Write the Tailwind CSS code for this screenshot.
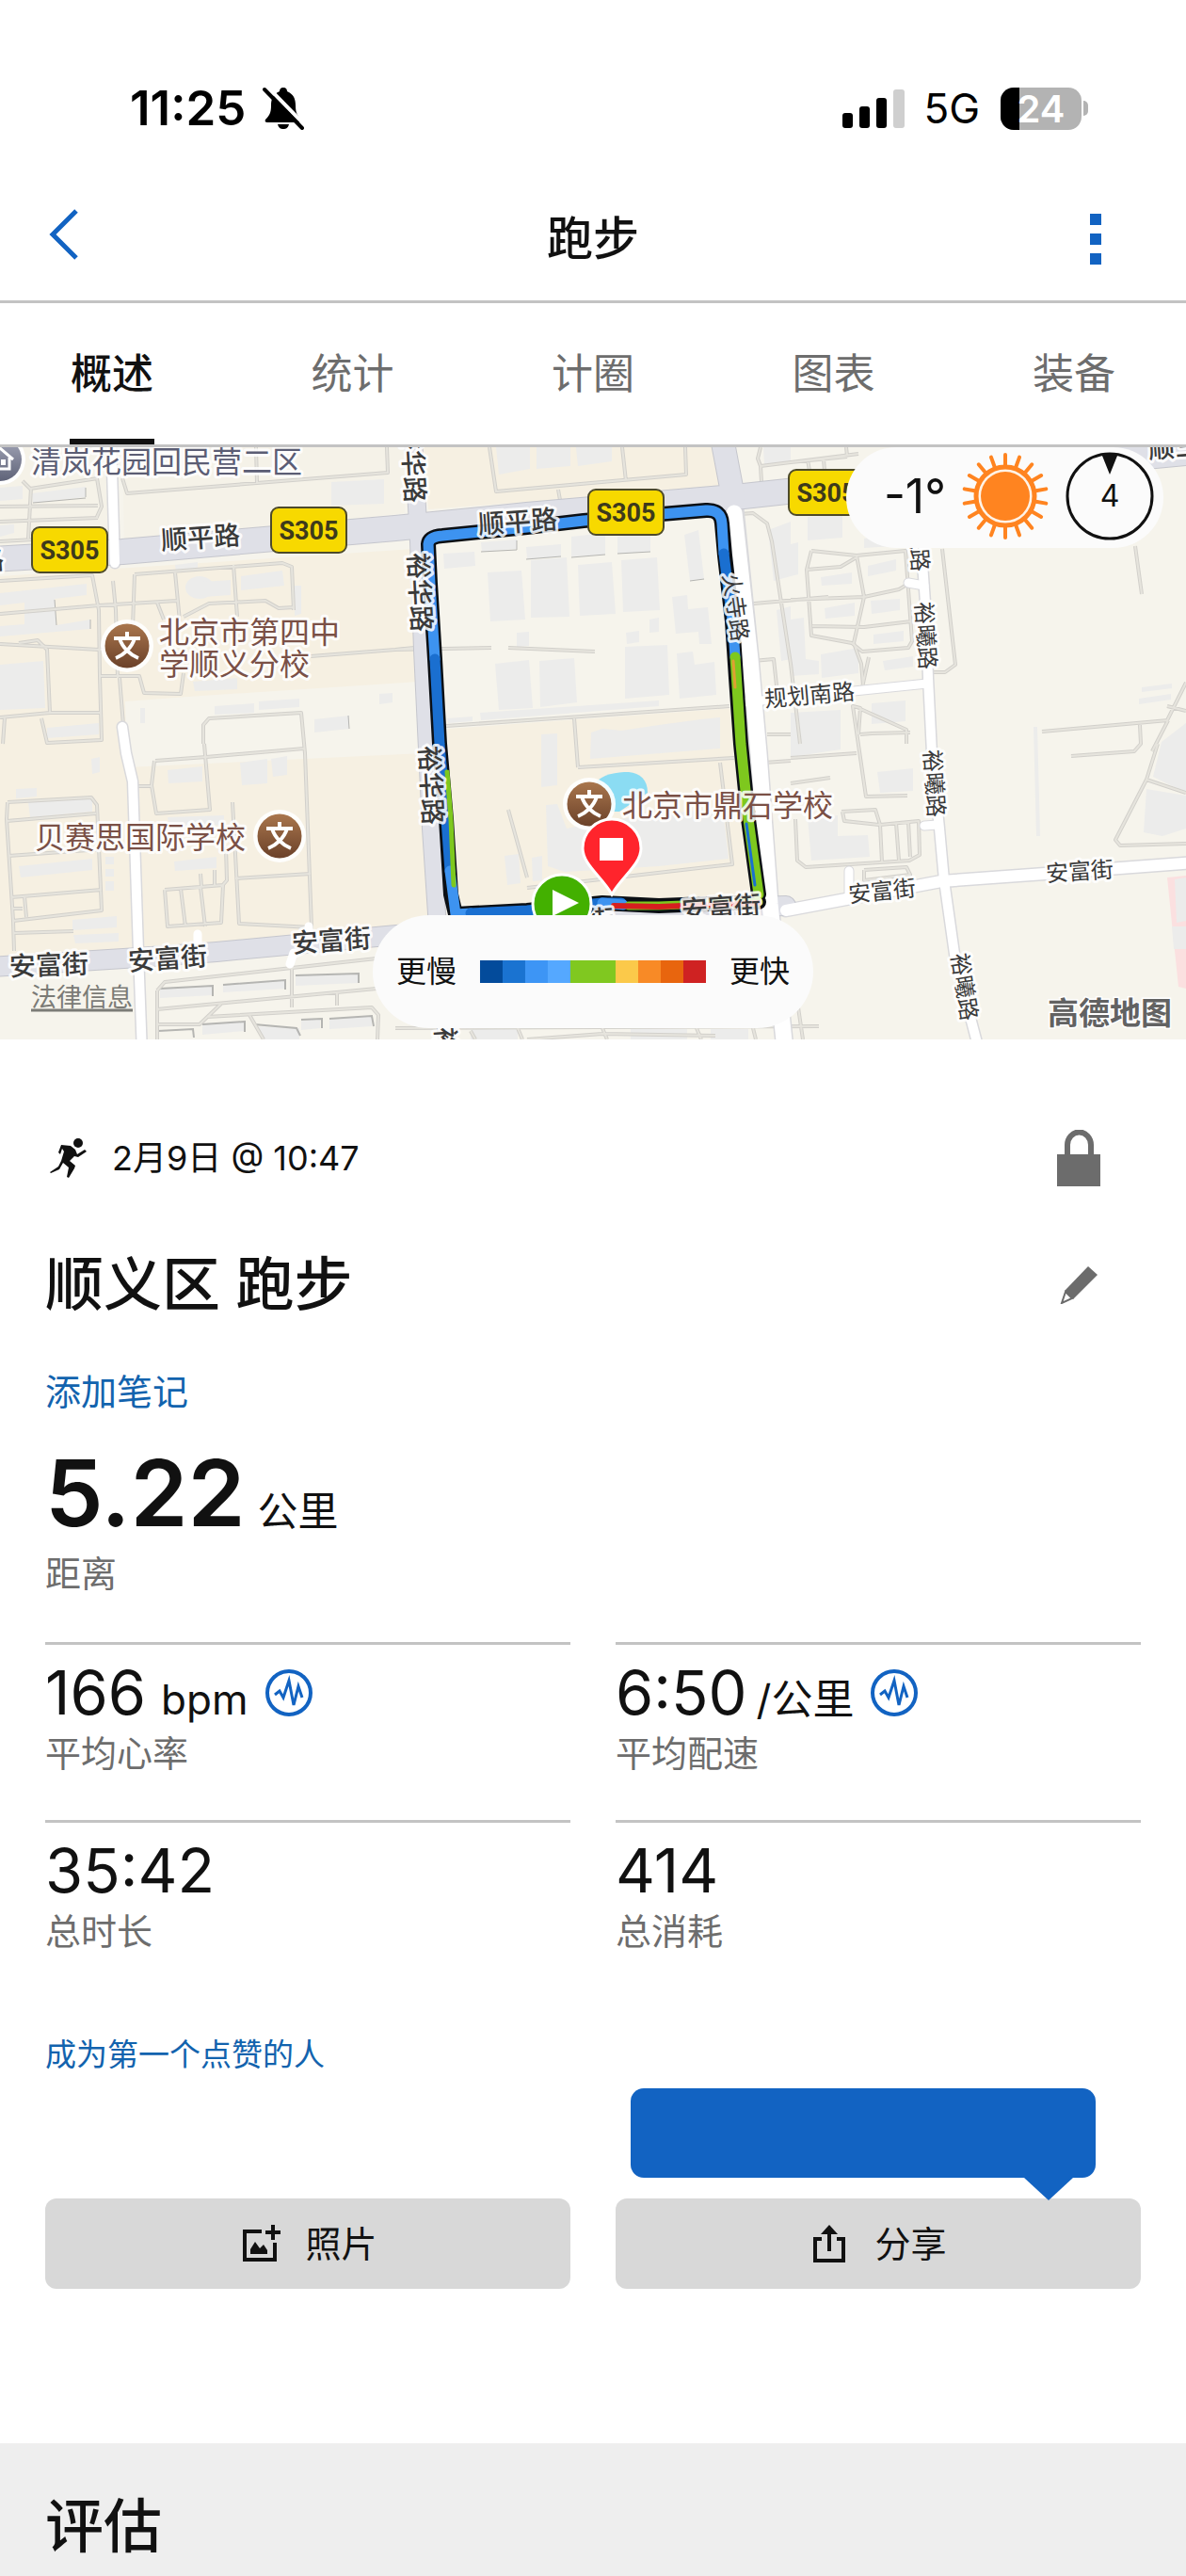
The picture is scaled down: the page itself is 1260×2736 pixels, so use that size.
<!DOCTYPE html>
<html lang="zh-CN">
<head>
  <meta charset="UTF-8" />
  <meta name="viewport" content="width=device-width, initial-scale=1.0" />
  <title>跑步</title>
  <script src="https://cdn.jsdelivr.net/npm/@tailwindcss/browser@4"></script>
</head>
<body class="flex min-h-screen flex-col bg-white font-['Inter','Noto_Sans_CJK_SC',sans-serif] text-[#111]">

  <!-- Status bar -->
  <div class="flex items-center justify-between pt-20 pr-[104px] pl-[138px] text-black">
    <div class="flex h-[70px] items-center gap-[18px]">
      <span class="text-[51px] leading-[70px] font-semibold">11:25</span>
      <svg class="h-[46px] w-[44px]" viewBox="0 0 44 46" aria-label="静音">
        <path d="M22 1c-3 0-4 2-4 4C11 8 9 13 9 20c0 8-2 11-6 15-1 2 0 3 2 3h34c2 0 3-1 2-3-4-4-6-7-6-15 0-7-2-12-9-15 0-2-1-4-4-4z" fill="#000" />
        <path d="M16 40h12c-1 4-3 5-6 5s-5-1-6-5z" fill="#000" />
        <path d="M5 0 46 42" stroke="#fff" stroke-width="4" />
        <path d="M2 3 42 44" stroke="#000" stroke-width="4" stroke-linecap="round" />
      </svg>
    </div>
    <div class="flex h-[70px] items-center">
      <svg class="h-[42px] w-[66px]" viewBox="0 0 66 42" aria-label="信号">
        <rect x="0" y="26" width="11" height="16" rx="3" />
        <rect x="18" y="19" width="11" height="23" rx="3" />
        <rect x="36" y="10" width="11" height="32" rx="3" />
        <rect x="54" y="1" width="12" height="41" rx="3" fill="#cfcfcf" />
      </svg>
      <span class="ml-5 text-[44px] leading-[70px]">5G</span>
      <div class="relative ml-[22px] h-[45px] w-[86px] overflow-hidden rounded-[14px] bg-[#b3b3b3] text-center text-[40px] leading-[46px] font-semibold text-white">
        <div class="absolute inset-y-0 left-0 w-5 bg-black"></div>
        <span class="relative">24</span>
      </div>
      <div class="ml-[2px] h-4 w-[5px] rounded-r-full bg-[#b3b3b3]"></div>
    </div>
  </div>

  <!-- Title bar -->
  <header class="mt-[54px] mb-[15px] flex h-[100px] items-center justify-between px-[50px]">
    <button class="w-14 pb-[10px]" aria-label="返回">
      <svg class="h-[56px] w-[36px]" viewBox="0 0 36 56" fill="none" stroke="#1263c2" stroke-width="5"><path d="M31 3 6 28l25 25" /></svg>
    </button>
    <h1 class="text-[49px] leading-[60px] font-medium">跑步</h1>
    <button class="flex w-14 flex-col items-end gap-[9px] pr-10" aria-label="更多">
      <span class="size-3 bg-[#1263c2]"></span>
      <span class="size-3 bg-[#1263c2]"></span>
      <span class="size-3 bg-[#1263c2]"></span>
    </button>
  </header>

  <!-- Tabs -->
  <nav class="flex h-[156px] justify-between border-y-[3px] border-[#c3c3c3] px-[74px] text-[44px] text-[#6d6d6d]">
    <a href="#overview" class="flex w-[90px] items-center justify-center border-b-[6px] border-[#111] pt-[6px] font-medium whitespace-nowrap text-[#111]">概述</a>
    <a href="#stats" class="flex w-[90px] items-center justify-center whitespace-nowrap">统计</a>
    <a href="#laps" class="flex w-[90px] items-center justify-center whitespace-nowrap">计圈</a>
    <a href="#charts" class="flex w-[90px] items-center justify-center whitespace-nowrap">图表</a>
    <a href="#gear" class="flex w-[90px] items-center justify-center whitespace-nowrap">装备</a>
  </nav>

  <!-- Map -->
  <section class="relative overflow-hidden">
    <svg class="block w-full" viewBox="0 475 1260 629" role="img" aria-label="路线地图">
      <defs>
        <linearGradient id="school" x1="0" y1="0" x2="0" y2="1">
          <stop offset="0" stop-color="#a9764d" />
          <stop offset="1" stop-color="#6b4129" />
        </linearGradient>
        <linearGradient id="home" x1="0" y1="0" x2="0" y2="1">
          <stop offset="0" stop-color="#a3a6b8" />
          <stop offset="1" stop-color="#5f6378" />
        </linearGradient>
        <g id="schoolPin">
          <circle r="28" fill="#fff" fill-opacity=".9" />
          <circle r="23.500" fill="url(#school)" />
          <path d="M0-15v6M-14-8h28M-8-8C-5 2 4 10 12 13M8-8C5 2-4 10-12 13" fill="none" stroke="#fff" stroke-width="4" />
        </g>
        <g id="badge">
          <rect x="-40" y="-24" width="80" height="48" rx="8" fill="#f7d900" stroke="#4d4a2a" stroke-width="2" />
          <text y="10" text-anchor="middle" font-family="Liberation Sans Narrow, Roboto, sans-serif" font-size="27" font-weight="700" fill="#3d3a1c">S305</text>
        </g>
        <!-- footpaths and lanes -->
        <path id="lanes" fill="none" stroke-linejoin="round" d="
          M24 511 32 519 104 508M33 518 30 572M0 538 104 537M0 554 104 550M103 508 108 538 102 551M0 575 90 570
          M130 508 135 524 412 502 411 475M272 475 273 513
          M0 617 98 611 105 648 106 718M0 652 105 643 188 638M120 617 123 648 125 720M143 610 300 598 310 602 312 648
          M143 610 141 665M186 608 191 660M248 600 252 655M167 640 174 658M195 655 222 641 282 638 296 646 312 645
          M0 684 105 690 142 688M20 683 40 680 50 690 53 757 0 762M105 718 148 718 153 736 192 737 195 715
          M106 718 108 786 50 789 44 763M53 757 106 757M127 720 131 770M5 762 3 790
          M216 790 216 770 222 763 320 757 324 800 331 985 254 981 247 852M330 697 420 690M250 933 330 928
          M165 808 219 804 323 795M217 790 223 860 166 864 161 834 164 808M144 835 162 835
          M8 852 97 847 103 855 108 967 14 978 7 870 8 852M7 872 102 864M9 909 108 902M12 953 108 945M14 965 24 965M26 952 28 974
          M14 978 15 1010M15 991 78 989M175 945 237 940 235 980 178 984 175 945M192 944 197 984M213 942 218 984
          M213 928 214 942M228 924 228 940M240 900 241 935 235 942
          M167 1052 175 1043 310 1028 400 1018M167 1052 167 1104M167 1072 400 1050M167 1088 212 1088 235 1066M220 1080 395 1070 402 1078 401 1104
          M310 1028 310 1070M358 1055 358 1068M265 1078 280 1104
          M520 475 527 522 729 504 728 475M661 475 665 511M593 520 595 531
          M420 690 522 688M540 688 632 692M474 771 775 750M610 763 614 815M540 860 560 932M420 690 440 688M614 815 780 805M765 810 778 918 560 943
          M786 546 800 545 815 556 820 575 840 705 850 790M808 475 805 487 808 495 840 491 912 482M808 495 809 512M790 642 880 634
          M800 702 822 700 825 728M815 780 840 780M812 810 840 808M840 491 900 485M899 475 900 484M858 488 860 500M875 488 876 500
          M862 585 857 605 862 675 905 683 916 692 965 688 969 681 962 585 910 590 862 585M910 590 918 634 907 683M857 605 893 602 910 592
          M840 637 918 634 955 626 965 620M863 665 918 666 968 660M907 683 915 705 917 728M923 698 916 730
          M1001 583 1015 706 1004 714 990 714M1206 580 1213 631M1107 777 1241 765M1240 765 1260 725M1241 765 1224 798M1211 770 1212 790 1205 798 1138 803
          M912 752 963 775 963 790M912 780 914 752 906 750 920 846 964 845M840 805 910 800M914 780 926 779 967 778
          M840 832 882 826M894 862 930 860 935 876 976 872 977 908 966 914 856 921 847 914 845 870M935 876 937 916M952 874 955 914M965 873 967 910M895 862 897 872 934 876
          M918 924 963 921 967 929 918 935 918 924
          M1230 790 1218 828 1185 892 1190 898 1260 896M1218 828 1260 842M1240 750 1260 755
          M420 1092 870 1090M500 1095 505 1104M550 1092 555 1104M640 1092 645 1104M740 1092 745 1104M800 1092 803 1104M848 1070 853 1104M560 1104 640 1098 760 1100" />
      </defs>

      <rect y="475" width="1260" height="629" fill="#f6f4ec" />
      <g fill="#f6f0e2">
        <path d="M0 612 440 583 455 985 155 1012 0 1020z" />
        <path d="M450 475h312l5 42-312 24z" />
        <path d="M476 774 780 752 802 950 500 966 484 950z" />
      </g>
      <path d="M200 740 445 724 450 800 135 815 133 745z" fill="#f6f4ec" />
      <path d="M0 475H120L122 585 0 590zM130 475H430V545L132 580z" fill="#f5f2e8" />

      <!-- buildings -->
      <g fill="#ececeb">
        <path d="M0 518 24 516V530L0 532zM34 524 91 517V528L35 534zM0 558 15 557V566L0 570zM352 512 408 509V535L352 537z" />
        <path d="M0 630 92 620V632L58 636 60 664 96 658V668L0 676V665L26 663V640L0 643zM0 706 46 702 48 752 0 754z" />
        <ellipse cx="212" cy="624" rx="15" ry="12" />
        <path d="M215 618 245 616V632L216 634zM256 612 300 606 302 622 256 627zM186 600 210 597V604L187 606zM313 622 320 622V652L313 654zM205 724 252 720V732L207 734z" />
        <path d="M228 750 270 747V757L228 759zM275 745 318 742V751L275 754zM334 764 371 760V774L334 778zM403 737 417 736V746L403 748zM149 752 154 752V768L149 768zM50 773 105 768V780L50 784z" />
        <path d="M97 806 106 804V820L98 822zM178 818 215 814V830L179 832zM255 810 284 806V832L257 834zM288 806 305 803V823L290 825z" />
        <path d="M17 838 39 837V846L17 848zM30 852 98 847V862L32 868zM20 920 98 912V924L22 932zM185 915 230 910V922L186 925zM178 868 238 866V876L180 880zM77 977 124 973V985L77 988zM78 993 126 991V1000L80 1002z" />
        <path d="M112 910h9v8h-9zM112 923h9v8h-9zM112 936h9v10h-9z" />
        <path d="M527 475H563V498L530 504zM570 475H606V495L570 498zM612 475H650V490L614 495z" />
        <path d="M511 576 549 573V583L512 586zM471 588 504 586 505 601 472 604zM559 581 596 578V591L560 594zM607 570 643 566V589L607 591zM656 570 691 566V586L656 588z" />
        <path d="M518 608 554 606 558 658 521 660zM564 595 602 592 605 655 564 656zM614 600 650 597 654 652 616 654zM660 595 698 592 701 648 662 650z" />
        <path d="M727 568 742 563 748 615 733 617zM714 634 730 632 731 647 752 645 756 684 743 684 742 671 718 673zM549 672 562 671V686L549 687zM665 672 679 670V682L666 684zM690 658 700 656V671L690 672z" />
        <path d="M526 705 562 701 566 752 530 754zM573 702 610 699 613 746 574 751zM664 687 709 685 711 738 664 742zM719 694 736 692 738 706 759 703 761 738 722 742z" />
        <path d="M510 757 700 744V750L511 765zM475 763 502 761V766L476 768z" />
        <path d="M575 780 592 779V834L575 836zM628 778 640 774 660 776 700 770 745 764 765 762V795L627 806z" />
        <path d="M580 855 592 854 602 880 640 872 700 865 768 858 774 912 700 920 600 926 582 920zM536 909 551 907 553 938 539 940zM565 911 576 909V935L566 936z" />
        <path d="M811 475H840V490L812 494zM816 563 840 554V612L822 617zM825 648 840 644V700L830 702z" />
        <path d="M858 549 895 547V571L858 574zM918 572 950 568V580L918 582zM840 578 848 576V610L840 612zM922 601 952 594V606L922 612zM872 613 905 608V620L873 622zM876 646 908 640V654L877 657zM925 638 956 636V648L926 652zM928 674 960 670V681L928 684zM938 702 970 697V708L940 712zM872 695 912 688V715L873 720z" />
        <path d="M840 658 854 656 856 700 870 702V716L840 718zM926 747 962 744V766L926 769zM840 757 893 754V796L840 804zM932 820 970 816V840L935 842zM858 868 890 866V888L922 887 924 910 862 914z" />
        <path d="M1213 730 1245 726V731L1213 735zM1210 742 1244 737V743L1210 748zM1234 788 1260 768V842L1225 825zM1218 838 1260 845V880L1235 888 1215 884zM1098 772 1102 772 1105 888 1101 888z" />
        <path d="M170 1050 226 1047V1057L170 1060zM237 1046 303 1041V1050L237 1054zM314 1036 380 1034V1044L314 1047zM215 1088 260 1085V1095L215 1099zM320 1084 340 1082V1092L320 1094zM350 1082 395 1079V1090L350 1093zM270 1090 318 1092V1104H280z" />
        <path d="M500 1093h50v11h-50zM670 1093h60v11h-60zM755 1093h40v11h-40z" />
      </g>
      <g fill="none" stroke="#b5b5b2" stroke-width="2">
        <path d="M170 1050 226 1047V1058M237 1046 303 1041V1051M314 1036 381 1034V1044M215 1088 260 1085V1096M320 1083 342 1082V1092M350 1082 395 1079 397 1090M168 1095 205 1093 206 1102M270 1088 315 1092 319 1100" />
        <path d="M511 586 549 584V574M559 594 596 591M607 592 643 589M656 588 691 586M733 617 748 615M91 518V528M35 534 91 529M96 658V668M60 664 58 637M370 760 371 774" stroke-width="1" />
      </g>
      <path d="M1240 932 1260 930V1050L1252 1048z" fill="#fbe0e0" />
      <path d="M1248 934 1260 932V978L1250 980zM1245 984H1260V1008H1247z" fill="#ececeb" />

      <use href="#lanes" stroke="#d2d0cb" stroke-width="4" />
      <use href="#lanes" stroke="#e6e4dd" stroke-width="2" />

      <!-- streets -->
      <g fill="none" stroke-linecap="round" stroke-linejoin="round">
        <g stroke="#d9d9dc" stroke-width="15">
          <path d="M118 465 122 598M130 772 134 800 141 830 147 1010 151 1120" stroke-width="13" />
          <path d="M835 967 1000 936 1110 928 1270 916" />
          <path d="M978 570 983 640 986 720 990 800 998 880 1003 935 1015 1020 1040 1115" stroke-width="13" />
          <path d="M790 746 985 726M965 619 982 622M982 877 996 876M902 925V955" stroke-width="11" />
          <path d="M780 535 797 700 806 800 818 960 834 1115" stroke-width="20" />
        </g>
        <g stroke="#dcdde4" stroke-width="26">
          <path d="M-10 594 130 586 420 561 560 547 790 527 900 515 1270 480" stroke="#c5c6cd" stroke-width="28" />
          <path d="M-10 1027 147 1017 230 1011 400 995 560 980 700 966 835 962" stroke="#c5c6cd" stroke-width="22" />
          <path d="M439 465 445 575 449 690 458 880 466 1000 476 1115" stroke="#c5c6cd" stroke-width="20" />
          <path d="M767 465 779 528" stroke="#c5c6cd" />
          <path d="M-10 594 130 586 420 561 560 547 790 527 900 515 1270 480" stroke="#dfe0e7" />
          <path d="M-10 1027 147 1017 230 1011 400 995 560 980 700 966 835 962" stroke="#dfe0e7" stroke-width="20" />
          <path d="M439 465 445 575 449 690 458 880 466 1000 476 1115" stroke="#dfe0e7" stroke-width="18" />
          <path d="M767 465 779 528" stroke="#dfe0e7" stroke-width="24" />
        </g>
        <g stroke="#fff" stroke-width="12">
          <path d="M118 465 122 598M130 772 134 800 141 830 147 1010 151 1120" stroke-width="10" />
          <path d="M835 967 1000 936 1110 928 1270 916" />
          <path d="M978 570 983 640 986 720 990 800 998 880 1003 935 1015 1020 1040 1115" stroke-width="10" />
          <path d="M790 746 985 726M965 619 982 622M982 877 996 876M902 925V955M210 992V1004M328 984V990M312 1012 308 1024" stroke-width="9" />
          <path d="M780 545 797 700 806 800 818 960 834 1115" stroke-width="17" />
        </g>
      </g>

      <path d="M632 832C640 822 655 820 668 820c12 1 20 8 20 22l-30 20h-20z" fill="#8bdcf3" />

      <!-- route -->
      <g fill="none" stroke-linejoin="round" stroke-linecap="round">
        <path d="M484 971 479 950 474 870 467 790 462 700 457 620 455 578Q456 570 470 569L560 560 620 553 750 542Q766 541 767 556L770 590 778 660 782 720 787 790 795 870 806 950M484 971 560 967 640 959 700 962 806 958" stroke="#0b0f14" stroke-width="16" />
        <g stroke-width="11">
          <path d="M462 700 457 620 455 578Q456 570 470 569L560 560 620 553 750 542Q766 541 767 556L769 588" stroke="#3d93f0" />
          <path d="M769 588 778 660" stroke="#1a6fd0" />
          <path d="M777 640 781 698" stroke="#3d93f0" />
          <path d="M781 698 787 790 795 870 806 950" stroke="#7ec81e" />
          <path d="M462 700 467 790 474 870 478 925" stroke="#1a6fd0" />
          <path d="M478 925 484 971 500 970" stroke="#3d93f0" />
          <path d="M500 970 560 967 640 959 660 959" stroke="#1a6fd0" />
          <path d="M640 959 662 961" stroke="#3d93f0" />
          <path d="M668 962 700 962 806 958" stroke="#7ec81e" stroke-width="9" />
          <path d="M652 962 700 963 806 959" stroke="#d61f1f" stroke-width="6" />
        </g>
        <path d="M475 820 479 870 482 940" stroke="#7ec81e" stroke-width="5" />
        <path d="M779 702 781 730" stroke="#e0a032" stroke-width="3" />
        <path d="M793 875 802 940" stroke="#1a6fd0" stroke-width="3" />
      </g>

      <!-- street names -->
      <g font-family="Noto Sans CJK SC, sans-serif" text-anchor="middle" fill="#3a3a3a" stroke="#fff" stroke-opacity=".85" stroke-width="6" stroke-linejoin="round" paint-order="stroke" font-size="28" font-weight="500">
        <text transform="translate(213 571) rotate(-4)" dy="10">顺平路</text>
        <text transform="translate(550 554) rotate(-4)" dy="10">顺平路</text>
        <text transform="translate(439 492) rotate(87)" dy="10">裕华路</text>
        <text transform="translate(446 629) rotate(87)" dy="10">裕华路</text>
        <text transform="translate(458 834) rotate(87)" dy="10">裕华路</text>
        <text transform="translate(475 1133) rotate(87)" dy="10">裕华路</text>
        <text transform="translate(52 1025) rotate(-2)" dy="10">安富街</text>
        <text transform="translate(178 1018) rotate(-4)" dy="10">安富街</text>
        <text transform="translate(352 999) rotate(-4)" dy="10">安富街</text>
        <text transform="translate(766 964) rotate(-4)" dy="10">安富街</text>
        <text transform="translate(610 979) rotate(-4)" dy="10">安富街</text>
        <text transform="translate(-38 597) rotate(-4)" dy="10">顺平路</text>
        <text transform="translate(1262 474) rotate(-4)" dy="10">顺三路</text>
        <g font-size="24" font-weight="400">
          <text transform="translate(782 645) rotate(82)" dy="9">火寺路</text>
          <text transform="translate(860 738) rotate(-5)" dy="9">规划南路</text>
          <text transform="translate(976 571) rotate(86)" dy="9">裕曦路</text>
          <text transform="translate(984 675) rotate(86)" dy="9">裕曦路</text>
          <text transform="translate(993 832) rotate(86)" dy="9">裕曦路</text>
          <text transform="translate(1025 1048) rotate(81)" dy="9">裕曦路</text>
          <text transform="translate(937 946) rotate(-6)" dy="9">安富街</text>
          <text transform="translate(1147 925) rotate(-4)" dy="9">安富街</text>
        </g>
      </g>

      <use href="#badge" x="74" y="584" />
      <use href="#badge" x="328" y="563" />
      <use href="#badge" x="665" y="544" />
      <use href="#badge" x="878" y="523" />

      <!-- places -->
      <g font-family="Noto Sans CJK SC, sans-serif" font-size="32" fill="#7a5046" stroke="#fff" stroke-opacity=".85" stroke-width="6" stroke-linejoin="round" paint-order="stroke">
        <text x="33" y="502" fill="#5b5d74">清岚花园回民营二区</text>
        <text x="169" y="683">北京市第四中</text>
        <text x="169" y="717">学顺义分校</text>
        <text x="37" y="901">贝赛思国际学校</text>
        <text x="661" y="867">北京市鼎石学校</text>
      </g>
      <circle cx="0" cy="488" r="27" fill="#fff" />
      <circle cx="0" cy="488" r="23" fill="url(#home)" />
      <path d="M-14 488 0 476 14 488M-9 486V498H10V486" fill="none" stroke="#fff" stroke-width="3" />
      <path d="M1 488h5v6h-5z" fill="#fff" />
      <use href="#schoolPin" x="135" y="686" />
      <use href="#schoolPin" x="297" y="888" />
      <use href="#schoolPin" x="626" y="854" />

      <!-- start and finish -->
      <circle cx="597" cy="960" r="31" fill="#43b000" stroke="#fff" stroke-width="3" />
      <path d="M587 945v28l28-14z" fill="#fff" />
      <path d="M650 950C640 932 619 918 619 901a31 31 0 0 1 62 0c0 17-21 31-31 49z" fill="#ff242c" stroke="#fff" stroke-width="3" />
      <rect x="637" y="890" width="25" height="24" fill="#fff" />

      <a href="#legal">
        <text x="33" y="1069" font-family="Noto Sans CJK SC, sans-serif" font-size="27" fill="#7b7b76">法律信息</text>
        <path d="M33 1073H141" stroke="#7b7b76" stroke-width="3" />
      </a>
      <text x="1113" y="1088" font-family="Noto Sans CJK SC, sans-serif" font-size="33" font-weight="700" fill="#626262" stroke="#fff" stroke-width="3" paint-order="stroke">高德地图</text>
    </svg>

    <!-- weather -->
    <div class="absolute top-0 right-6 flex h-[107px] items-center rounded-full bg-[#fbfbfb] pr-[10px] pb-1 pl-10">
      <span class="text-[50px] leading-[60px]">-1°</span>
      <svg class="ml-[16px] size-[94px]" viewBox="-47 -47 94 94" aria-label="晴">
        <circle r="31" fill="#fff3e6" stroke="#ff8420" stroke-width="5" />
        <circle r="26" fill="#ff8420" />
        <g id="rays" stroke="#ff8420" stroke-width="4" stroke-linecap="round"></g>
      </svg>
      <svg class="ml-[17px] size-[94px]" viewBox="-47 -47 94 94" aria-label="风向">
        <circle r="45" fill="none" stroke="#111" stroke-width="3" />
        <path d="M-8-43Q0-46 8-43L0-23z" fill="#111" />
        <text y="11" text-anchor="middle" font-family="Inter, sans-serif" font-size="32" fill="#111">4</text>
      </svg>
    </div>

    <!-- pace legend -->
    <div class="absolute bottom-3 left-1/2 flex h-[120px] -translate-x-1/2 items-center gap-[25px] rounded-full bg-[#fbfbfb] px-[25px] text-[32px] whitespace-nowrap">
      <span>更慢</span>
      <div class="flex h-6">
        <i class="w-6 bg-[#034b9b]"></i><i class="w-6 bg-[#1a73d1]"></i><i class="w-6 bg-[#3d95f5]"></i><i class="w-6 bg-[#55a8ff]"></i><i class="w-12 bg-[#80c820]"></i><i class="w-6 bg-[#fbc94a]"></i><i class="w-6 bg-[#f88a26]"></i><i class="w-6 bg-[#e8650e]"></i><i class="w-6 bg-[#cf2222]"></i>
      </div>
      <span>更快</span>
    </div>
  </section>

  <!-- Activity summary -->
  <main class="px-12 pt-24">
    <div class="flex h-[60px] items-center justify-between pr-[43px]">
      <div class="flex items-center gap-[27px] pl-[5px]">
        <svg class="h-[42px] w-[39px]" viewBox="0 0 39 42" fill="#111" aria-label="跑步">
          <circle cx="30" cy="5" r="5" />
          <path d="M12 7 22 8 27 12 29 17 37 12 39 14 30 20 26 19 21 24 27 29 26 32 20 42 18 41 20 31 14 26 10 33 1 37 0 36 9 30 12 24 15 14 13 11 11 17 9 15z" />
        </svg>
        <span class="text-[36px] leading-[48px]">2月9日 @ 10:47</span>
      </div>
      <button aria-label="隐私">
        <svg class="h-[60px] w-[46px]" viewBox="0 0 46 60"><path d="M0 26H46V60H0z" fill="#6c6c6c" /><path d="M11 28V16a12 13 0 0 1 25 0V28" fill="none" stroke="#6c6c6c" stroke-width="6" /></svg>
      </button>
    </div>
    <div class="mt-[69px] flex h-[72px] items-center justify-between pr-[43px]">
      <h2 class="text-[62px] leading-[72px] font-medium">顺义区 跑步</h2>
      <button class="flex w-[46px] justify-center" aria-label="编辑">
        <svg class="size-[40px]" viewBox="0 0 40 40"><path d="M30 0 40 9 14 35 5 26z" fill="#6c6c6c" /><path d="M6 27 2 39 13 34z" fill="#fff" stroke="#6c6c6c" stroke-width="2" /></svg>
      </button>
    </div>
    <a href="#note" class="mt-[53px] block text-[38px] leading-[48px] text-[#1263ae]">添加笔记</a>

    <div class="mt-[34px] flex items-baseline gap-[13px]">
      <span class="text-[98px] leading-[100px] font-semibold">5.22</span>
      <span class="text-[43px] leading-none">公里</span>
    </div>
    <p class="mt-[11px] text-[38px] leading-[48px] text-[#6d6d6d]">距离</p>

    <dl class="mt-[49px] grid grid-cols-2 gap-x-12">
      <div class="flex flex-col-reverse border-t-[3px] border-[#c3c3c3] pt-[18px] pb-[47px]">
        <dt class="mt-[7px] text-[38px] leading-[48px] text-[#6d6d6d]">平均心率</dt>
        <dd class="flex h-[66px] items-baseline">
          <span class="text-[65px] leading-[66px]">166</span>
          <span class="ml-4 text-[44px] leading-none">bpm</span>
          <svg class="ml-[18px] size-[50px] self-center" viewBox="0 0 50 50" fill="none" stroke="#1263c2"><circle cx="25" cy="25" r="23" stroke-width="4" /><path d="M10 27 15 23 19 30 25 12 30 38 35 18 39 30" stroke-width="3" /></svg>
        </dd>
      </div>
      <div class="flex flex-col-reverse border-t-[3px] border-[#c3c3c3] pt-[18px] pb-[47px]">
        <dt class="mt-[7px] text-[38px] leading-[48px] text-[#6d6d6d]">平均配速</dt>
        <dd class="flex h-[66px] items-baseline">
          <span class="text-[65px] leading-[66px]">6:50</span>
          <span class="ml-[10px] text-[44px] leading-none">/公里</span>
          <svg class="ml-[18px] size-[50px] self-center" viewBox="0 0 50 50" fill="none" stroke="#1263c2"><circle cx="25" cy="25" r="23" stroke-width="4" /><path d="M10 27 15 23 19 30 25 12 30 38 35 18 39 30" stroke-width="3" /></svg>
        </dd>
      </div>
      <div class="flex flex-col-reverse border-t-[3px] border-[#c3c3c3] pt-[18px] pb-[47px]">
        <dt class="mt-[7px] text-[38px] leading-[48px] text-[#6d6d6d]">总时长</dt>
        <dd class="text-[65px] leading-[66px]">35:42</dd>
      </div>
      <div class="flex flex-col-reverse border-t-[3px] border-[#c3c3c3] pt-[18px] pb-[47px]">
        <dt class="mt-[7px] text-[38px] leading-[48px] text-[#6d6d6d]">总消耗</dt>
        <dd class="text-[65px] leading-[66px]">414</dd>
      </div>
    </dl>

    <a href="#like" class="mt-9 block text-[33px] leading-[48px] text-[#1263ae]">成为第一个点赞的人</a>

    <div class="mt-[129px] grid grid-cols-2 gap-12 text-[38px]">
      <button class="flex h-24 items-center justify-center gap-[25px] rounded-xl bg-[#d8d8d8] pl-1">
        <svg class="size-[42px]" viewBox="0 0 42 42" fill="none" stroke="#111" stroke-width="4"><path d="M21 8H3V38H35V20M33 1V17M25 9H41" /><path d="M9 32V27L14 19 19 26 23 22 27 28V32z" fill="#111" stroke="none" /></svg>
        照片
      </button>
      <div class="relative">
        <button class="flex h-24 w-full items-center justify-center gap-[31px] rounded-xl bg-[#d8d8d8] pl-1">
          <svg class="h-[42px] w-[34px]" viewBox="0 0 34 42" fill="none" stroke="#111" stroke-width="4"><path d="M9 16H2V39H32V16H25M17 29V7" /><path d="M17 1 26 11H8z" fill="#111" stroke="none" /></svg>
          分享
        </button>
        <div class="absolute right-12 bottom-[118px] left-4 h-[95px] rounded-[14px] bg-[#1263c2]">
          <svg class="absolute top-full right-6 h-6 w-[52px]" viewBox="0 0 52 24" preserveAspectRatio="none"><path d="M0 0H52L26 24z" fill="#1263c2" /></svg>
        </div>
      </div>
    </div>
  </main>

  <section class="mt-[164px] flex-1 bg-[#eee] px-12 pt-[53px]">
    <h2 class="text-[62px] leading-[72px] font-medium">评估</h2>
  </section>

  <script>
    // 18 rays around the sun
    const rays = document.getElementById('rays');
    for (let i = 0; i < 18; i++) {
      const line = document.createElementNS('http://www.w3.org/2000/svg', 'line');
      line.setAttribute('y1', -33);
      line.setAttribute('y2', -44);
      line.setAttribute('transform', `rotate(${i * 20})`);
      rays.appendChild(line);
    }
  </script>
</body>
</html>
